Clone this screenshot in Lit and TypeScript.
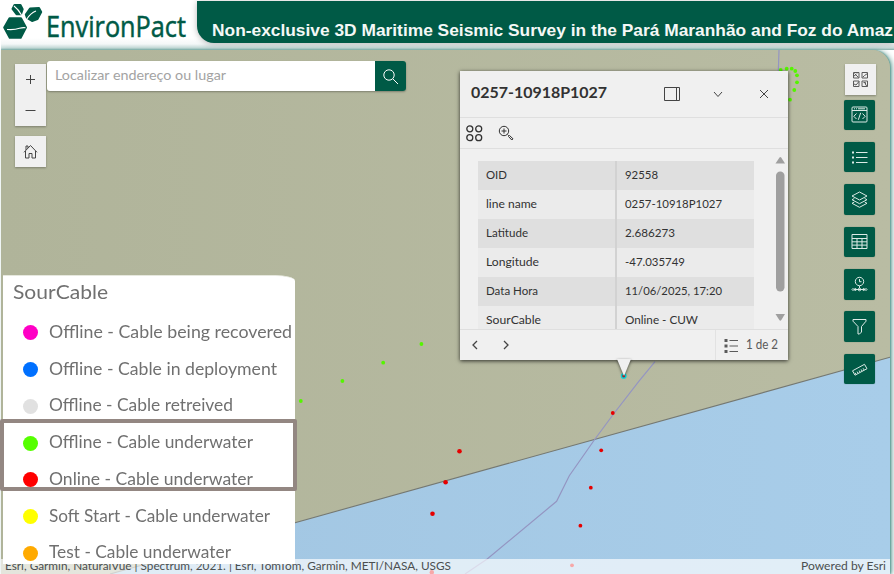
import { LitElement, html, svg, css } from "lit";
import { customElement } from "lit/decorators.js";

const LEGEND = [
  ["#ff00c5", "Offline - Cable being recovered", 243],
  ["#0070ff", "Offline - Cable in deployment", 228],
  ["#e1e1e1", "Offline - Cable retreived", 184],
  ["#55ff00", "Offline - Cable underwater", 204],
  ["#ff0000", "Online - Cable underwater", 204],
  ["#ffff00", "Soft Start - Cable underwater", 221],
  ["#ffaa00", "Test - Cable underwater", 182],
] as const;

const ROWS = [
  ["OID", 21, "92558", 33],
  ["line name", 51, "0257-10918P1027", 97],
  ["Latitude", 42, "2.686273", 50],
  ["Longitude", 53, "-47.035749", 60],
  ["Data Hora", 52, "11/06/2025, 17:20", 97],
  ["SourCable", 55, "Online - CUW", 73],
] as const;

const GREEN = [[421.4,344],[383.2,362.7],[342.4,381],[300.8,401],[780.7,70],[786.7,68.7],[791.7,68.7],[795.3,71],[797,75.3],[797,82.3],[794.3,90],[790,99.7]];
const RED = [[459.5,451.3,2.3],[445.6,482.3,2.3],[432.5,513.7,2.3],[612.8,413,1.9],[601.2,450.3,1.9],[590.8,487.7,1.9],[580.4,525.7,1.9],[572,565.3,1.9],[431.8,572.3,2.2]];

/* A single line of text set to an exact measure. */
const line = (text: string, width: number, size: number, weight = 400) => html`
  <svg class="line" width=${width + 2} height=${Math.ceil(size * 1.5)}>
    <text x="0" y=${size * 1.1} font-size=${size} font-weight=${weight}
      textLength=${width} lengthAdjust="spacingAndGlyphs">${text}</text>
  </svg>`;

const TOOLS = [
  svg`<rect x="1" y="1" width="15" height="15" rx="1"/><path d="M1 4.500h15M3 2.800h1M5 2.800h1M7 2.800h7M5.500 7.500 2.800 10.300l2.700 2.700M11.500 7.500l2.700 2.800-2.700 2.700M9.700 6.800 7.300 13.800"/>`,
  svg`<path d="M5 3.500h11.500M5 8.500h11.500M5 13.500h11.500"/><path d="M1 3.500h2M1 8.500h2M1 13.500h2" stroke-width="2"/>`,
  svg`<path d="M8.500 1 16 5 8.500 9 1 5zM3.300 7.500 1 8.700 8.500 12.700 16 8.700 13.700 7.500M3.300 11 1 12.300 8.500 16.300 16 12.300 13.700 11"/>`,
  svg`<path d="M1 1.500h15v14H1zM1 5.500h15M1 8.800h15M1 12.100h15M6 5.500v10M11 5.500v10"/>`,
  svg`<circle cx="8.500" cy="5.500" r="4.200"/><path d="M8.500 3v2.700h2M2.500 13.500h12M8.500 10v2"/><circle cx="4.300" cy="13.500" r="1"/><circle cx="8.500" cy="13.500" r="1.300"/><circle cx="12.700" cy="13.500" r="1"/><path d="M2.500 12 1 13.500 2.500 15M14.500 12l1.500 1.500-1.500 1.500"/>`,
  svg`<path d="M2 1.500h13v1.700L10.500 8.500v5.500l-2 2h-1.500V8.500L2 3.200z"/>`,
  svg`<path d="M1.500 9.800 13.500 3.300 16 7.700 4 14.200zM5 13.300l-.9-1.600M7 12.200l-.9-1.600M9 11.100l-.9-1.600M11 10l-.9-1.600M13 8.900l-.9-1.600"/>`,
];

@customElement("app-root")
export class AppRoot extends LitElement {
  static styles = css`
    :host {
      display: flex; flex-direction: column; position: relative;
      width: 894px; height: 574px; overflow: hidden; background: #fff;
      font-family: Lato, "Open Sans", sans-serif; color: #323232;
    }
    * { box-sizing: border-box; }
    svg { display: block; flex: none; }
    .line { overflow: visible; }
    .line text { fill: currentColor; }
    .ico { fill: none; stroke: currentColor; stroke-width: 1; }
    header {
      height: 50px; flex: none; display: flex; margin-left: 1px; padding-top: 1px;
      background: linear-gradient(#fff 38px, #f4f7f7 44px, #c9dcda 48px, #87b0ab 50px);
    }
    .brand { width: 196px; overflow: visible; }
    .brand text { font-family: "Open Sans", sans-serif; fill: #005a46; stroke: #005a46; stroke-width: .5px; }
    .banner {
      flex: 1; height: 42px; background: #005a46; border-radius: 0 0 0 17px;
      padding: 16px 0 0 15px; color: #f4f8f6; overflow: hidden;
      font-family: "Liberation Sans", Arial, sans-serif;
      box-shadow: 0 1px 6px rgba(0,0,0,.28);
    }
    main {
      position: relative; flex: 1; margin: 0 4px 0 1px; min-height: 0;
      display: flex; justify-content: space-between;
      border-radius: 0 18px 0 0; background: #b4b89e;
      box-shadow: 1px 0 2px #5d9c94, 3px 0 5px #9cc0bb;
    }
    .map { position: absolute; left: 0; top: 0; border-radius: 0 18px 0 0; }
    .controls { position: relative; display: flex; gap: 1px; padding: 11px 0 0 14px; align-items: flex-start; }
    .nav { display: flex; flex-direction: column; gap: 10px; padding-top: 3px; }
    .card { background: #f0f0f0; box-shadow: 0 1px 2px rgba(0,0,0,.3); width: 31px; color: #444; }
    .card .cell { height: 31px; display: grid; place-items: center; }
    .search { display: flex; width: 359px; height: 30px; box-shadow: 0 1px 2px rgba(0,0,0,.3); border-radius: 3px; }
    .field { flex: 1; background: #fff; border-radius: 3px 0 0 3px; padding: 4px 0 0 8px; color: #a3a3a3; }
    .go { width: 31px; background: #005a46; color: #fff; display: grid; place-items: center; border-radius: 0 3px 3px 0; }
    .tools { position: relative; display: flex; flex-direction: column; width: 46px; padding-top: 14px; }
    .grid { margin: 0 0 4.500px 1px; color: #5a5a5a; }
    .tool {
      width: 30.500px; height: 30.500px; margin-bottom: 11.900px; border-radius: 2px; flex: none;
      display: grid; place-items: center; background: #005a46; color: #dceae6;
      box-shadow: 0 0 1px rgba(0,60,40,.6);
    }
    .credits {
      position: absolute; left: 1px; right: 4px; bottom: 0; height: 15px; padding: 0 2px 0 4px;
      display: flex; justify-content: space-between; background: rgba(255,255,255,.66); color: #4b4f50;
    }
    .credits svg { margin-top: -2px; }
    .legend {
      position: absolute; left: 3px; top: 275px; width: 292px; height: 289px; background: #fff;
      border-radius: 0 20px 0 0 / 0 6px 0 0; color: #707070; padding: 1px 0 0 10px; overflow: hidden;
      border-top: 1px solid #e6e8de;
    }
    .soft { filter: blur(.45px); }
    .heading { height: 36.500px; }
    .entry { display: flex; align-items: center; gap: 11px; height: 36.750px; padding-left: 10px; }
    .dot { width: 15px; height: 15px; border-radius: 50%; flex: none; margin-top: 2px; }
    .mark { position: absolute; left: 0; top: 419px; width: 297px; height: 72px; border: 4px solid #938782; border-radius: 2px; }
    .popup {
      position: absolute; left: 460px; top: 71px; width: 328px; height: 289px; background: #f0f0f0;
      display: flex; flex-direction: column; box-shadow: 0 1px 4px rgba(0,0,0,.75);
    }
    .head { height: 47px; display: flex; align-items: center; padding: 0 18px 0 11px; border-bottom: 1px solid #dfdfdf; color: #444; }
    .head .line { margin: -2px 55px 0 0; color: #323232; }
    .panel { margin-right: 32px; }
    .chev { margin-right: 36px; }
    .acts { height: 31px; display: flex; align-items: center; gap: 15px; padding-left: 6px; border-bottom: 1px solid #dfdfdf; color: #323232; }
    .body { height: 180px; display: flex; padding: 12px 3px 0 17.500px; overflow: hidden; justify-content: space-between; }
    .table { width: 276.500px; }
    .row { display: grid; grid-template-columns: 137.500px 1fr; height: 29.100px; background: #ebebeb; }
    .row:nth-child(odd) { background: #dfdfdf; }
    .cellx { padding: 4.600px 0 0 8px; }
    .val { border-left: 2px solid #d2d2d2; }
    .foot { flex: 1; border-top: 1px solid #dfdfdf; display: flex; align-items: center; padding-left: 10px; color: #444; }
    .arrows { flex: 1; }
    .pages { width: 73px; height: 30px; display: flex; align-items: center; gap: 7px; padding-left: 8px; border-left: 1px solid #e2e2e2; color: #5a5a5a; }
    .pages .line { margin-top: -2px; }
    .bar { margin: -6px -1px 0 0; }
    .tip { position: absolute; left: 155px; top: 288px; filter: drop-shadow(0 1px 1.500px rgba(0,0,0,.6)); }
  `;

  private map() {
    return html`<svg class="map" width="889" height="524" viewBox="1 50 889 524">
      <defs><linearGradient id="land"><stop offset="0" stop-color="#b0b49a"/><stop offset="1" stop-color="#b9bca3"/></linearGradient>
      <linearGradient id="sea"><stop offset="0" stop-color="#a2c6e2"/><stop offset="1" stop-color="#a8cde9"/></linearGradient></defs>
      <rect x="1" y="50" width="889" height="524" fill="url(#land)"/>
      <path d="M890 357.300 110 574H890z" fill="url(#sea)"/>
      <path d="M890 357.300 295 522.700 110 574" stroke="#757871" stroke-width="1.100" fill="none"/>
      <path d="M779 50 778.300 72 M655 361.700 638.600 381.700 612.800 415 594.300 440 569.300 475.700 556.600 501.300 487.200 559 465 574" fill="none" stroke="#9495c2" stroke-width="1.200"/>
      ${GREEN.map(([x, y]) => svg`<circle cx=${x} cy=${y} r="1.900" fill="#55f500"/>`)}
      ${RED.map(([x, y, r]) => svg`<circle cx=${x} cy=${y} r=${r} fill="#e60000"/>`)}
      <circle cx="623.700" cy="376" r="2.200" fill="#a33" stroke="#00dce6" stroke-width="1.300"/>
    </svg>`;
  }

  render() {
    return html`
      <header>
        <svg class="brand" width="196" height="49" viewBox="1 1 196 49">
          <g fill="#005a46" stroke="#005a46" stroke-width="2" stroke-linejoin="round">
            <path d="M9.500 18.300h11.500l5 9.200-5.300 10.200h-11L4.200 27.500z"/>
            <path d="M14.500 5h6l2.200 4.200-1.700 5h-4.500L12.500 9z"/>
            <path d="M27 18 25.800 14.500 30 8.500 39 8l2.200 4-3.700 7-5.500 2z"/>
          </g>
          <path d="M7 29.500q7.500.6 12.500-1.200 3-1 6-.6M14 6q4.500 3.500 7.500 9M26.500 19.500q4-6.500 9.500-8.500" fill="none" stroke="#fff" stroke-width="1.100"/>
          <text x="46" y="37" font-size="28.500" textLength="140" lengthAdjust="spacingAndGlyphs">EnvironPact</text>
        </svg>
        <div class="banner">${line("Non-exclusive 3D Maritime Seismic Survey in the Pará Maranhão and Foz do Amaz", 681, 17.3, 700)}</div>
      </header>
      <main>
        ${this.map()}
        <div class="controls">
          <div class="nav">
            <div class="card">
              <div class="cell"><svg class="ico" width="11" height="11"><path d="M5.500 1v9M1 5.500h9"/></svg></div>
              <div class="cell"><svg class="ico" width="11" height="11"><path d="M.5 5.500h10"/></svg></div>
            </div>
            <div class="card"><div class="cell">
              <svg class="ico" width="15" height="15"><path d="M1 8.300 7.500 1.500 14 8.300M2.500 7v7H6V9.500h3V14h3.500V7M3 6V2h2v2"/></svg>
            </div></div>
          </div>
          <div class="search">
            <div class="field">${line("Localizar endereço ou lugar", 171, 13.5)}</div>
            <div class="go"><svg class="ico" width="17" height="17"><circle cx="7" cy="7" r="5.200"/><path d="M10.800 10.800 16 16"/></svg></div>
          </div>
        </div>
        <div class="tools">
          <div class="card grid"><div class="cell">
            <svg class="ico" width="17" height="17"><path d="M1.500 1.500h5.500v5.500H1.500zM10 1.500h5.500v5.500H10zM1.500 10h5.500v5.500H1.500zM10 10h5.500v5.500H10zM2.500 2.500l4 4M2 5l2-1.500 1-1M11 6l1.500-1.500 3-2M2 13l2 1 3-3.500M11.500 11.500h2v1.500M13 12.500l2 3"/></svg>
          </div></div>
          ${TOOLS.map((t) => html`<div class="tool"><svg class="ico" width="17" height="17">${t}</svg></div>`)}
        </div>
      </main>
      <div class="credits">
        ${line("Esri, Garmin, NaturalVue | Spectrum, 2021. | Esri, TomTom, Garmin, METI/NASA, USGS", 446, 12)}
        ${line("Powered by Esri", 85, 12)}
      </div>
      <div class="legend"><div class="soft">
        <div class="heading">${line("SourCable", 95, 20)}</div>
        ${LEGEND.map(([c, t, w]) => html`<div class="entry"><span class="dot" style="background:${c}"></span>${line(t, w, 17)}</div>`)}
      </div></div>
      <div class="mark"></div>
      <section class="popup">
        <div class="head">
          ${line("0257-10918P1027", 136, 15.5, 700)}
          <svg class="ico panel" width="17" height="15"><path d="M.5.5h15v13H.5zM12.500.5v13"/></svg>
          <svg class="ico chev" width="10" height="7"><path d="M1 1l4 4.500L9 1"/></svg>
          <svg class="ico" width="10" height="10"><path d="M1 1l8 8M9 1 1 9"/></svg>
        </div>
        <div class="acts">
          <svg class="ico" width="17" height="17"><g stroke-width="1.300"><circle cx="3.800" cy="3.800" r="3"/><circle cx="12.700" cy="3.800" r="3"/><circle cx="3.800" cy="12.700" r="3"/><circle cx="12.700" cy="12.700" r="3"/></g></svg>
          <svg class="ico" width="16" height="16"><circle cx="6" cy="6" r="4.700"/><path d="M6 3.500v5M3.500 6h5M9.500 9.500l1.300 1.300M10.500 11.500l1-1 3.500 3.300-1.200 1.200z"/></svg>
        </div>
        <div class="body">
          <div class="table">${ROWS.map(([k, kw, v, vw]) => html`<div class="row"><div class="cellx">${line(k, kw, 11.7)}</div><div class="cellx val">${line(v, vw, 11.7)}</div></div>`)}</div>
          <svg class="bar" width="11" height="174" fill="#9f9f9f"><path d="M.5 8.500 4.500 2.500Q5.300 1.500 6.200 2.500L10 8.500z"/><rect x="1" y="16.500" width="8.500" height="120" rx="4.200"/><path d="M.5 159h9.500l-3.700 6q-1 1.300-2 0z"/></svg>
        </div>
        <div class="foot">
          <svg class="ico arrows" width="200" height="12"><path d="M7 2 3 6l4 4M34 2l4 4-4 4" stroke-width="1.300"/></svg>
          <div class="pages">
            <svg class="ico" width="15" height="15"><path d="M5.500 2.500H14M5.500 8H14M5.500 13.500H14"/><path d="M.5 2.500h3M.5 8h3M.5 13.500h3" stroke-width="3"/></svg>
            ${line("1 de 2", 32, 12.5)}
          </div>
        </div>
        <svg class="tip" width="18" height="18"><path d="M2 0h14L9 17z" fill="#f0f0f0"/></svg>
      </section>`;
  }
}
